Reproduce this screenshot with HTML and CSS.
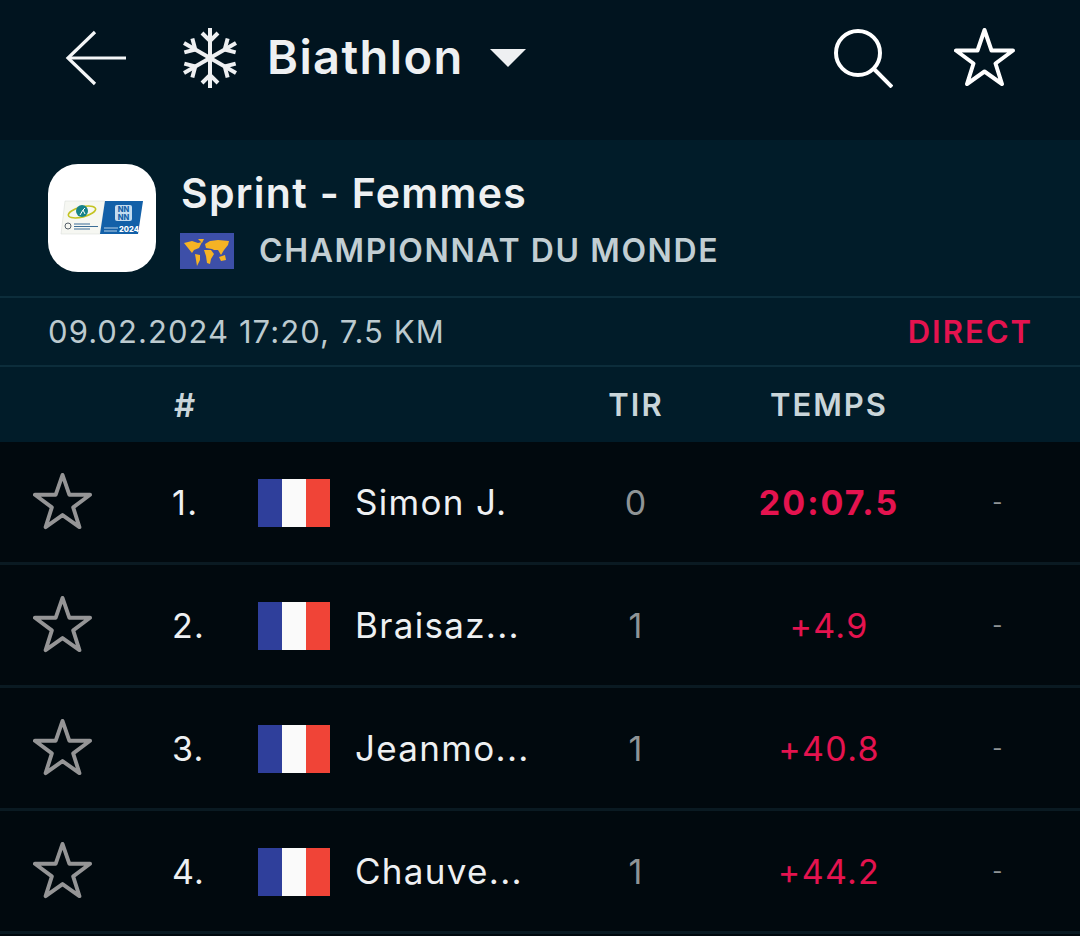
FILE: index.html
```html
<!DOCTYPE html>
<html lang="fr">
<head>
  <meta charset="UTF-8">
  <title>Sprint - Femmes</title>
  <link rel="stylesheet" href="styles.css">
</head>
<body>

<header class="topbar">
  <svg class="icon-back" width="62" height="56" viewBox="0 0 62 56" fill="none" stroke="#f4f6f7" stroke-width="3.2">
    <path d="M61 28H3"/>
    <path d="M30 2L3 28l27 26"/>
  </svg>
  <svg class="icon-snow" width="56" height="60" viewBox="-28 -30 56 60" fill="none" stroke="#eef0f2" stroke-width="4">
    <g id="arm">
      <path d="M0 0V-30"/>
      <path d="M-8 -25L0 -17L8 -25"/>
    </g>
    <use href="#arm" transform="rotate(60)"/>
    <use href="#arm" transform="rotate(120)"/>
    <use href="#arm" transform="rotate(180)"/>
    <use href="#arm" transform="rotate(240)"/>
    <use href="#arm" transform="rotate(300)"/>
  </svg>
  <span class="sport">Biathlon</span>
  <span class="caret"></span>
  <svg class="icon-search" width="60" height="60" viewBox="0 0 60 60" fill="none" stroke="#fff" stroke-width="4">
    <circle cx="25" cy="25" r="22"/>
    <path d="M41 41L59 59"/>
  </svg>
  <svg class="icon-star" width="62" height="62" viewBox="0 0 62 62" fill="none" stroke="#fff" stroke-width="4" stroke-linejoin="round">
    <path d="M30.500 3L37.500 23.500H59L41.500 36.500L48 57L30.500 44.500L13 57L19.500 36.500L2 23.500H23.500Z"/>
  </svg>
</header>

<section class="event">
  <div class="logo">
    <svg width="84" height="36" viewBox="0 0 84 36">
      <path d="M5 1H45L40 34H1Z" fill="#f6f7f2" stroke="#d5d8d4" stroke-width="0.5"/>
      <path d="M45 1H83L78 34H40Z" fill="#1360a8"/>
      <ellipse cx="22" cy="12" rx="14" ry="5" fill="none" stroke="#c3c321" stroke-width="1.600" transform="rotate(-14 22 12)"/>
      <circle cx="22" cy="11" r="6" fill="#15828a"/>
      <path d="M20 15L23 10L25 8M23 10L25 14" stroke="#fff" stroke-width="1" fill="none"/>
      <circle cx="8" cy="26" r="3" fill="none" stroke="#56606a" stroke-width="1"/>
      <path d="M14 24H30M14 26.500H38M14 29H30" stroke="#3b6d96" stroke-width="1.100"/>
      <rect x="55" y="5" width="17" height="16" rx="2" fill="#c4dcf0"/>
      <text x="63.500" y="12" class="logo-nn">NN</text>
      <text x="63.500" y="19.500" class="logo-nn">NN</text>
      <path d="M44 28H58M44 31H57" stroke="#b9d1e6" stroke-width="1"/>
      <text x="59" y="32" class="logo-year">2024</text>
    </svg>
  </div>
  <div class="event-text">
    <h1>Sprint - Femmes</h1>
    <div class="event-sub">
      <svg class="world" width="54" height="36" viewBox="0 0 54 36">
        <rect width="54" height="36" fill="#3d4fa8"/>
        <path d="M4 10L12 8L18 10L22 9L19 15L14 17L12 20L8 15Z" fill="#f5b324"/>
        <path d="M15 21L20 22L20 27L17 33Z" fill="#f5b324"/>
        <path d="M18 6L24 6L22 10Z" fill="#f5b324"/>
        <path d="M25 11L30 8L38 7L49 8L48 12L44 17L41 22L38 17L34 17L32 16L26 15Z" fill="#f5b324"/>
        <path d="M24 17L31 17L34 21L31 26L30 31L27 30L26 23Z" fill="#f5b324"/>
        <path d="M39 24L45 22L46 27L41 28Z" fill="#f5b324"/>
      </svg>
      <span class="competition">CHAMPIONNAT DU MONDE</span>
    </div>
  </div>
</section>

<div class="info">
  <span>09.02.2024 17:20, 7.5 KM</span>
  <span class="live">DIRECT</span>
</div>

<div class="row head">
  <span></span>
  <span class="hash">#</span>
  <span></span>
  <span></span>
  <span class="center">TIR</span>
  <span class="center">TEMPS</span>
  <span></span>
</div>

<div class="row athlete">
  <svg class="star" width="60" height="62" viewBox="0 0 62 62"><path d="M30.500 3L37.500 23.500H59L41.500 36.500L48 57L30.500 44.500L13 57L19.500 36.500L2 23.500H23.500Z"/></svg>
  <span class="rank">1.</span>
  <span class="flag"><i></i><i></i><i></i></span>
  <span class="name">Simon J.</span>
  <span class="shots center">0</span>
  <span class="time winner center">20:07.5</span>
  <span class="dash center">-</span>
</div>
<div class="row athlete">
  <svg class="star" width="60" height="62" viewBox="0 0 62 62"><path d="M30.500 3L37.500 23.500H59L41.500 36.500L48 57L30.500 44.500L13 57L19.500 36.500L2 23.500H23.500Z"/></svg>
  <span class="rank">2.</span>
  <span class="flag"><i></i><i></i><i></i></span>
  <span class="name">Braisaz...</span>
  <span class="shots center">1</span>
  <span class="time center">+4.9</span>
  <span class="dash center">-</span>
</div>
<div class="row athlete">
  <svg class="star" width="60" height="62" viewBox="0 0 62 62"><path d="M30.500 3L37.500 23.500H59L41.500 36.500L48 57L30.500 44.500L13 57L19.500 36.500L2 23.500H23.500Z"/></svg>
  <span class="rank">3.</span>
  <span class="flag"><i></i><i></i><i></i></span>
  <span class="name">Jeanmo...</span>
  <span class="shots center">1</span>
  <span class="time center">+40.8</span>
  <span class="dash center">-</span>
</div>
<div class="row athlete">
  <svg class="star" width="60" height="62" viewBox="0 0 62 62"><path d="M30.500 3L37.500 23.500H59L41.500 36.500L48 57L30.500 44.500L13 57L19.500 36.500L2 23.500H23.500Z"/></svg>
  <span class="rank">4.</span>
  <span class="flag"><i></i><i></i><i></i></span>
  <span class="name">Chauve...</span>
  <span class="shots center">1</span>
  <span class="time center">+44.2</span>
  <span class="dash center">-</span>
</div>

</body>
</html>
```

FILE: styles.css
```css
body {
  margin: 0;
  height: 936px;
  overflow: hidden;
  background: #01090e;
  font-family: Inter, "Liberation Sans", sans-serif;
  color: #fff;
}

.topbar {
  height: 140px;
  box-sizing: border-box;
  padding: 0 64px 25px 65px;
  background: #01141f;
  display: flex;
  align-items: center;
}
.icon-snow {
  margin-left: 55px;
}
.sport {
  margin-left: 29px;
  margin-bottom: 2px;
  font-size: 47px;
  font-weight: 600;
  letter-spacing: 1.4px;
  color: #eef0f2;
}
.caret {
  margin-left: 26px;
  width: 0;
  height: 0;
  border-left: 18px solid transparent;
  border-right: 18px solid transparent;
  border-top: 18px solid #eef0f2;
}
.icon-search {
  margin-left: auto;
  margin-right: 2px;
}
.icon-star {
  margin-left: 59px;
}

.event {
  height: 156px;
  box-sizing: border-box;
  padding: 24px 48px 0;
  background: #011c29;
  display: flex;
  gap: 25px;
}
.logo {
  width: 108px;
  height: 108px;
  border-radius: 30px;
  background: #fff;
  display: flex;
  align-items: center;
  justify-content: center;
}
.logo-year {
  font-size: 7.5px;
  font-weight: 800;
  fill: #fff;
}
.logo-nn {
  font-size: 7.5px;
  font-weight: 800;
  text-anchor: middle;
  fill: #1360a8;
}
.event-text h1 {
  margin: 5px 0 0;
  font-size: 41px;
  line-height: 48px;
  font-weight: 600;
  letter-spacing: 1.3px;
  color: #eef0f2;
}
.event-sub {
  margin-top: 14px;
  margin-left: -1px;
  display: flex;
  align-items: center;
  gap: 25px;
}
.competition {
  font-size: 32px;
  font-weight: 600;
  letter-spacing: 1.6px;
  color: #c2ced3;
}

.info {
  height: 67px;
  padding: 0 47px 0 48px;
  background: #011c29;
  border-top: 2px solid #0c2d3b;
  border-bottom: 2px solid #0c2d3b;
  display: flex;
  align-items: center;
  justify-content: space-between;
  font-size: 31px;
  letter-spacing: 1.07px;
  color: #bccacf;
}
.live {
  font-weight: 600;
  letter-spacing: 2px;
  color: #e4134f;
}

.row {
  display: grid;
  grid-template-columns: 172px 86px 97px 221px 120px 266px 72px;
  align-items: center;
}
.row .star {
  margin-left: 33px;
}
.head {
  height: 75px;
  background: #011c29;
  font-size: 31px;
  font-weight: 600;
  letter-spacing: 2px;
  color: #c9d5d9;
}
.hash {
  margin-left: 2px;
  font-size: 33px;
}
.center {
  text-align: center;
}

.athlete {
  height: 120px;
  border-bottom: 3px solid #0a1a22;
  font-size: 34px;
  letter-spacing: 1.3px;
}
.star {
  fill: none;
  stroke: #959596;
  stroke-width: 4;
  stroke-linejoin: round;
}
.rank {
  color: #eef0f2;
}
.name {
  font-size: 35px;
  color: #eef0f2;
}
.flag {
  width: 72px;
  height: 48px;
  margin-top: 2px;
  display: flex;
}
.flag i {
  flex: 1;
}
.flag i:nth-child(1) { background: #2f3f9b; }
.flag i:nth-child(2) { background: #fafafa; }
.flag i:nth-child(3) { background: #f04437; }
.shots {
  color: #8f9496;
}
.time {
  color: #e4134f;
}
.winner {
  font-weight: 700;
  letter-spacing: 2px;
}
.dash {
  font-size: 22px;
  color: #8f9496;
}
```
